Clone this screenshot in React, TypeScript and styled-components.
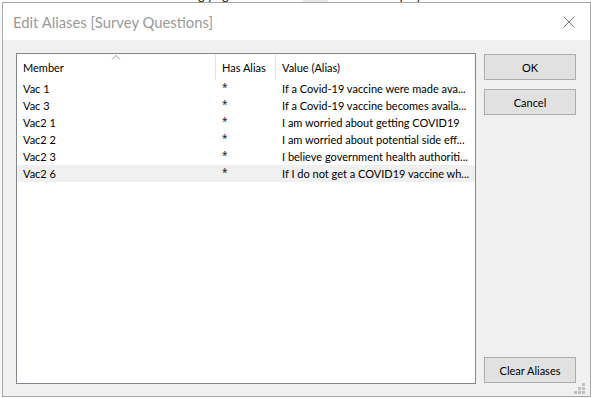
import styled, { createGlobalStyle } from "styled-components"

const GlobalStyle = createGlobalStyle`
  html, body {
    margin: 0;
    padding: 0;
    background: #f3f3f3;
  }
  body {
    font-family: Lato, "Noto Sans", sans-serif;
    font-size: 11px;
    color: #000;
  }
`

type Alias = { member: string; value: string; hover?: boolean }

const aliases: Alias[] = [
  { member: "Vac 1", value: "If a Covid-19 vaccine were made ava..." },
  { member: "Vac 3", value: "If a Covid-19 vaccine becomes availa..." },
  { member: "Vac2 1", value: "I am worried about getting COVID19" },
  { member: "Vac2 2", value: "I am worried about potential side eff..." },
  { member: "Vac2 3", value: "I believe government health authoriti..." },
  { member: "Vac2 6", value: "If I do not get a COVID19 vaccine wh...", hover: true },
]

const App = () => {
  return (
    <Desktop>
      <GlobalStyle />
      <Backdrop>
        <BgCell $w={140} $pl={13}>Vac2 1</BgCell>
        <BgCell $w={17}>1</BgCell>
        <BgCell $w={133}>Strongly agree</BgCell>
        <BgCell $w={25} $shade>&nbsp;</BgCell>
        <BgCell $w={150} $pl={7}>Full time employment</BgCell>
      </Backdrop>

      <Dialog>
        <TitleBar>
          <Title>Edit Aliases [Survey Questions]</Title>
          <CloseButton>
            <svg width="12" height="12" viewBox="0 0 12 12">
              <path d="M0.5 0.5 L11.5 11.5 M11.5 0.5 L0.5 11.5" stroke="#7a7a7a" strokeWidth="1" fill="none" />
            </svg>
          </CloseButton>
        </TitleBar>

        <Client>
          <ListView>
            <HeaderCell>
              Member
              <SortArrow width="9" height="5" viewBox="0 0 9 5">
                <path d="M0.5 4.5 L4.5 0.5 L8.5 4.5" stroke="#9a9a9a" strokeWidth="1" fill="none" />
              </SortArrow>
            </HeaderCell>
            <HeaderCell>Has Alias</HeaderCell>
            <HeaderCell $last>Value (Alias)</HeaderCell>
            {aliases.map((a) => (
              <Row key={a.member} $hover={a.hover}>
                <Cell>{a.member}</Cell>
                <StarCell>*</StarCell>
                <Cell>{a.value}</Cell>
              </Row>
            ))}
          </ListView>

          <ButtonColumn>
            <Button>OK</Button>
            <Button>Cancel</Button>
            <Button $bottom>Clear Aliases</Button>
          </ButtonColumn>
        </Client>

        <SizeGrip width="11" height="11" viewBox="0 0 11 11">
          <rect x="8" y="0" width="3" height="3" />
          <rect x="4" y="4" width="3" height="3" />
          <rect x="8" y="4" width="3" height="3" />
          <rect x="0" y="8" width="3" height="3" />
          <rect x="4" y="8" width="3" height="3" />
          <rect x="8" y="8" width="3" height="3" />
        </SizeGrip>
      </Dialog>
    </Desktop>
  )
}

export default App

const Desktop = styled.div`
    position: relative;
    width: 591px;
    height: 398px;
    overflow: hidden;
    background: #f7f7f7;
`
const Backdrop = styled.div`
    display: flex;
    margin-top: -12px;
    height: 16px;
    line-height: 16px;
    font-size: 12px;
    background: #ffffff;
`
const BgCell = styled.div<{ $w: number; $pl?: number; $shade?: boolean }>`
    width: ${(p) => p.$w}px;
    padding-left: ${(p) => p.$pl ?? 0}px;
    white-space: nowrap;
    background: ${(p) => (p.$shade ? "#e4e4e4" : "transparent")};
`
const Dialog = styled.div`
    position: absolute;
    left: 2px;
    top: 2px;
    width: 589px;
    height: 395px;
    box-sizing: border-box;
    border: 1px solid #a8a8a8;
    background: #f0f0f0;
    display: flex;
    flex-direction: column;
`
const TitleBar = styled.div`
    height: 37px;
    flex-shrink: 0;
    background: #ffffff;
    display: flex;
    align-items: center;
    padding-left: 10px;
`
const Title = styled.div`
    flex: 1;
    font-size: 14.8px;
    color: #9a9a9a;
    white-space: nowrap;
    padding-top: 1px;
`
const CloseButton = styled.div`
    width: 46px;
    height: 37px;
    display: flex;
    align-items: center;
    justify-content: center;
    margin-right: -2px;
`
const Client = styled.div`
    flex: 1;
    display: flex;
    gap: 8px;
    padding: 13px 14px 12px 13px;
`
const ListView = styled.div`
    width: 460px;
    box-sizing: border-box;
    border: 1px solid #828790;
    background: #ffffff;
    display: grid;
    grid-template-columns: 199px 60px 199px;
    grid-template-rows: 26px;
    grid-auto-rows: 17px;
    align-content: start;
`
const HeaderCell = styled.div<{ $last?: boolean }>`
    position: relative;
    box-sizing: border-box;
    border-right: 1px solid ${(p) => (p.$last ? "#f0f0f0" : "#e5e5e5")};
    padding-left: 6px;
    display: flex;
    align-items: center;
    white-space: nowrap;
`
const SortArrow = styled.svg`
    position: absolute;
    top: 1px;
    left: 50%;
    transform: translateX(-50%);
`
const Row = styled.div<{ $hover?: boolean }>`
    display: contents;
    & > div {
        background: ${(p) => (p.$hover ? "#f0f0f0" : "transparent")};
    }
`
const Cell = styled.div`
    line-height: 17px;
    padding-left: 6px;
    white-space: nowrap;
    overflow: hidden;
`
const StarCell = styled(Cell)`
    font-family: "Noto Sans", sans-serif;
    font-size: 10px;
    line-height: 15px;
    padding-left: 6px;
    color: #222;
`
const ButtonColumn = styled.div`
    display: flex;
    flex-direction: column;
    gap: 9px;
    padding: 1px 0;
`
const Button = styled.button<{ $bottom?: boolean }>`
    width: 92px;
    height: 26px;
    padding: 0;
    background: #e1e1e1;
    border: 1px solid #adadad;
    font-family: inherit;
    font-size: 11px;
    color: #000;
    margin-top: ${(p) => (p.$bottom ? "auto" : "0")};
`
const SizeGrip = styled.svg`
    position: absolute;
    right: 5px;
    bottom: 2px;
    fill: #c0c0c0;
`
